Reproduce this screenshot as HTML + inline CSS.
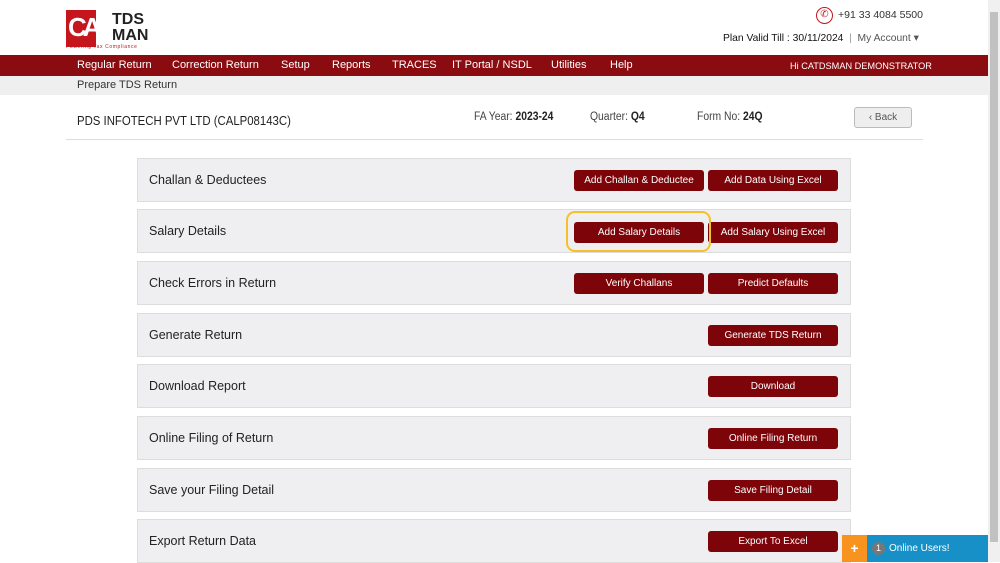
<!DOCTYPE html>
<html><head><meta charset="utf-8"><style>
*{margin:0;padding:0;box-sizing:border-box}
body{width:1000px;height:562px;overflow:hidden;background:#fff;font-family:"Liberation Sans",sans-serif;position:relative;color:#222}
.a{position:absolute}
.nav{left:0;top:55px;width:988px;height:21px;background:#8a0c10}
.nav span{position:absolute;top:4px;color:#fff;font-size:11px}
.sub{left:0;top:76px;width:988px;height:19px;background:#efefef;font-size:11px;color:#333}
.row{left:137px;width:714px;height:44px;background:#efeff1;border:1px solid #ddd}
.row .t{position:absolute;left:11px;top:14px;font-size:12.5px;color:#222}
.btn{position:absolute;top:11px;width:130px;height:21px;background:#7d0509;border-radius:3px;color:#fff;font-size:10px;text-align:center;line-height:21px}
.b1{left:436px}.b2{left:570px}
.sb{left:988px;top:0;width:12px;height:562px;background:#f0f0f0}
</style></head><body>
<div class="a" style="left:66px;top:10px;width:88px;height:37px;background:#c5161d"></div>
<div class="a" style="left:68px;top:12px;width:28px;height:30px;color:#fff;font-size:26px;font-weight:bold;letter-spacing:-4px;line-height:30px">CA</div>
<div class="a" style="left:96px;top:10px;width:58px;height:37px;background:#fff;font-size:16px;font-weight:bold;line-height:16px;color:#222;padding-left:16px;padding-top:2px">TDS<br>MAN</div>
<div class="a" style="left:66px;top:44px;font-size:5px;color:#c5161d;letter-spacing:.6px">Powering Tax Compliance</div>
<div class="a" style="left:816px;top:7px;width:17px;height:17px;border:1.5px solid #c5161d;border-radius:50%;color:#c5161d;font-size:10px;text-align:center;line-height:14px">✆</div>
<div class="a" style="left:838px;top:9px;font-size:10.5px;color:#333">+91 33 4084 5500</div>
<div class="a" style="left:723px;top:32px;font-size:10.3px;color:#111">Plan Valid Till : 30/11/2024 <span style="color:#999">&nbsp;|&nbsp;</span> <span style="color:#555">My Account ▾</span></div>
<div class="a nav">
<span style="left:77px">Regular Return</span><span style="left:172px">Correction Return</span><span style="left:281px">Setup</span><span style="left:332px">Reports</span><span style="left:392px">TRACES</span><span style="left:452px">IT Portal / NSDL</span><span style="left:551px">Utilities</span><span style="left:610px">Help</span>
<span style="left:790px;font-size:9.2px;top:6px">Hi CATDSMAN DEMONSTRATOR</span></div>
<div class="a sub"><span style="position:absolute;left:77px;top:3px">Prepare TDS Return</span></div>
<div class="a" style="left:77px;top:113px;font-size:13px;color:#222;transform:scaleX(0.875);transform-origin:0 0;white-space:nowrap">PDS INFOTECH PVT LTD (CALP08143C)</div>
<div class="a" style="left:474px;top:111px;font-size:11.5px;color:#444;transform:scaleX(0.9);transform-origin:0 0;white-space:nowrap">FA Year: <b style="color:#222">2023-24</b></div>
<div class="a" style="left:590px;top:111px;font-size:11.5px;color:#444;transform:scaleX(0.9);transform-origin:0 0;white-space:nowrap">Quarter: <b style="color:#222">Q4</b></div>
<div class="a" style="left:697px;top:111px;font-size:11.5px;color:#444;transform:scaleX(0.9);transform-origin:0 0;white-space:nowrap">Form No: <b style="color:#222">24Q</b></div>
<div class="a" style="left:854px;top:107px;width:58px;height:21px;background:#eee;border:1px solid #bbb;border-radius:3px;font-size:10px;color:#555;text-align:center;line-height:19px">‹ Back</div>
<div class="a" style="left:66px;top:139px;width:857px;height:1px;background:#ddd"></div>

<div class="a row" style="top:158px"><div class="t">Challan &amp; Deductees</div><div class="btn b1">Add Challan &amp; Deductee</div><div class="btn b2">Add Data Using Excel</div></div>
<div class="a row" style="top:209px"><div class="t">Salary Details</div><div class="btn b1" style="top:12px">Add Salary Details</div><div class="btn b2" style="top:12px">Add Salary Using Excel</div></div>
<div class="a" style="left:566px;top:211px;width:145px;height:41px;border:2.5px solid #f5c02a;border-radius:9px"></div>
<div class="a row" style="top:261px"><div class="t">Check Errors in Return</div><div class="btn b1">Verify Challans</div><div class="btn b2">Predict Defaults</div></div>
<div class="a row" style="top:313px"><div class="t">Generate Return</div><div class="btn b2">Generate TDS Return</div></div>
<div class="a row" style="top:364px"><div class="t">Download Report</div><div class="btn b2">Download</div></div>
<div class="a row" style="top:416px"><div class="t">Online Filing of Return</div><div class="btn b2">Online Filing Return</div></div>
<div class="a row" style="top:468px"><div class="t">Save your Filing Detail</div><div class="btn b2">Save Filing Detail</div></div>
<div class="a row" style="top:519px"><div class="t">Export Return Data</div><div class="btn b2">Export To Excel</div></div>

<div class="a" style="left:842px;top:535px;width:25px;height:27px;background:#f7931e;color:#fff;font-size:14px;font-weight:bold;text-align:center;line-height:27px">+</div>
<div class="a" style="left:867px;top:535px;width:121px;height:27px;background:#1790c8;color:#fff;font-size:10px;line-height:27px;padding-left:5px"><span style="display:inline-block;width:13px;height:13px;border-radius:50%;background:#777;text-align:center;line-height:13px;font-size:9px;margin-right:4px">1</span>Online Users!</div>
<div class="a sb"><div style="position:absolute;left:2px;top:12px;width:8px;height:530px;background:#c1c1c1"></div></div>
</body></html>
